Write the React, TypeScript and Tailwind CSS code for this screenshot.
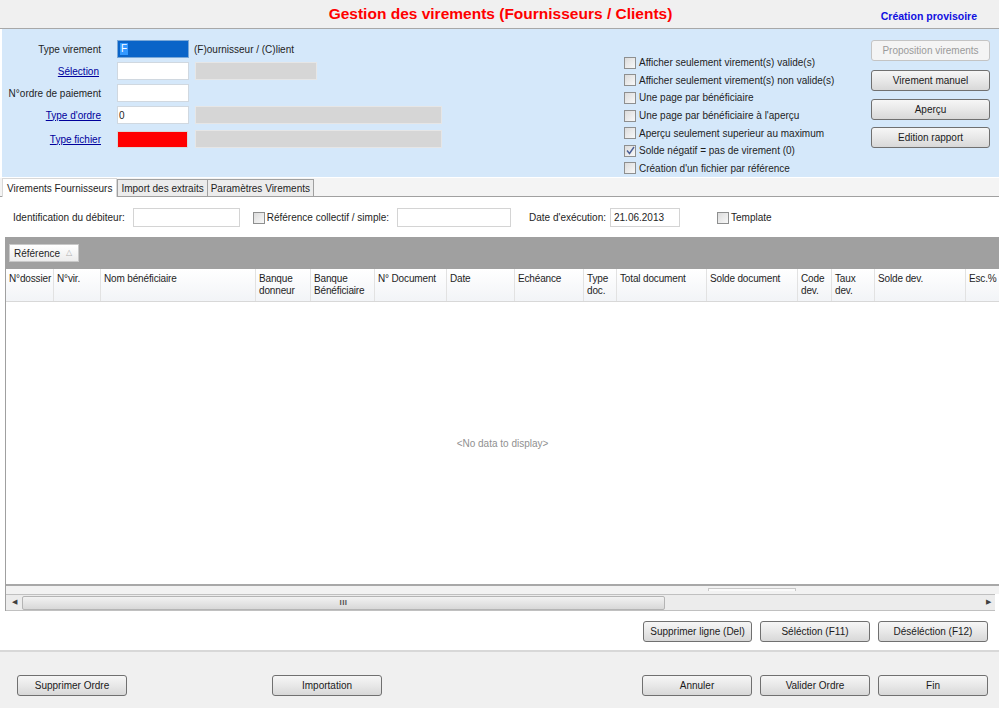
import React from "react";

const F = { fontFamily: "'Liberation Sans', Arial, sans-serif" };

function Btn({ children, w = "w-[110px]", disabled = false }: { children: React.ReactNode; w?: string; disabled?: boolean }) {
  return (
    <div
      className={`${w} h-[21px] flex items-center justify-center rounded-[3px] border ${
        disabled ? "border-[#c4c4c4] text-[#9a9a9a] bg-[#f4f4f4]" : "border-[#707070] text-[#1a1a1a] bg-gradient-to-b from-[#f6f6f6] via-[#e8e8e8] to-[#d8d8d8]"
      } text-[10px]`}
    >
      {children}
    </div>
  );
}

function Check({ checked = false }: { checked?: boolean }) {
  return (
    <div className="w-[12px] h-[12px] border border-[#8e8f8f] bg-gradient-to-br from-[#dcdcdc] to-[#f8f8f8] flex items-center justify-center shrink-0">
      {checked && (
        <svg width="9" height="9" viewBox="0 0 9 9">
          <path d="M1 4.5 L3.5 7.5 L8 1" fill="none" stroke="#4a5f97" strokeWidth="1.4" />
        </svg>
      )}
    </div>
  );
}

const cols: { label: string[]; w: number }[] = [
  { label: ["N°dossier"], w: 48 },
  { label: ["N°vir."], w: 47 },
  { label: ["Nom bénéficiaire"], w: 155 },
  { label: ["Banque", "donneur"], w: 55 },
  { label: ["Banque", "Bénéficiaire"], w: 64 },
  { label: ["N° Document"], w: 72 },
  { label: ["Date"], w: 68 },
  { label: ["Echéance"], w: 69 },
  { label: ["Type", "doc."], w: 33 },
  { label: ["Total document"], w: 90 },
  { label: ["Solde document"], w: 91 },
  { label: ["Code", "dev."], w: 34 },
  { label: ["Taux", "dev."], w: 43 },
  { label: ["Solde dev."], w: 91 },
  { label: ["Esc.%"], w: 60 },
];

export default function App() {
  return (
    <div style={F} className="w-[999px] h-[708px] overflow-hidden bg-white text-[10px] text-[#1e1e1e] flex flex-col">
      {/* header */}
      <div className="h-[29px] shrink-0 bg-[#f0f0f0] border-b border-[#a8a8a8] flex items-center relative">
        <div className="flex-1 text-center text-[#ff0000] font-bold text-[15.5px] pl-[2px]">Gestion des virements (Fournisseurs / Clients)</div>
        <div className="absolute right-[22px] top-[9px] text-[#1010e0] font-bold text-[10.5px]">Création provisoire</div>
      </div>

      {/* blue panel */}
      <div className="h-[148px] shrink-0 bg-[#d5e8fa] ml-[2px] flex">
        {/* form */}
        <div className="w-[460px] pt-[11px] flex flex-col gap-[4px]">
          <div className="flex items-center h-[18px]">
            <div className="w-[99px] text-right">Type virement</div>
            <div className="ml-[16px] w-[72px] h-[18px] bg-[#0a64c8] border border-[#7aa8d8] flex items-center pl-[2px]">
              <span className="bg-[#3399ff] text-white leading-[12px] px-[1px]">F</span>
            </div>
            <div className="ml-[5px]">(F)ournisseur / (C)lient</div>
          </div>
          <div className="flex items-center h-[18px]">
            <div className="w-[97px] text-right"><span className="text-[#00009c] underline">Sélection</span></div>
            <div className="ml-[18px] w-[72px] h-[18px] bg-white border border-[#d0d8e0]" />
            <div className="ml-[6px] w-[122px] h-[18px] bg-[#d6d6d6] border border-[#e6e6e6]" />
          </div>
          <div className="flex items-center h-[18px]">
            <div className="w-[99px] text-right">N°ordre de paiement</div>
            <div className="ml-[16px] w-[72px] h-[18px] bg-white border border-[#d0d8e0]" />
          </div>
          <div className="flex items-center h-[18px]">
            <div className="w-[99px] text-right"><span className="text-[#00009c] underline">Type d'ordre</span></div>
            <div className="ml-[16px] w-[72px] h-[18px] bg-white border border-[#d0d8e0] flex items-center pl-[1px]">0</div>
            <div className="ml-[6px] w-[247px] h-[18px] bg-[#d6d6d6] border border-[#e6e6e6]" />
          </div>
          <div className="flex items-center h-[18px] mt-[2px]">
            <div className="w-[99px] text-right"><span className="text-[#00009c] underline">Type fichier</span></div>
            <div className="ml-[16px] w-[71px] h-[17px] bg-[#ff0000] border border-[#d8d8d8]" />
            <div className="ml-[7px] w-[247px] h-[18px] bg-[#d6d6d6] border border-[#e6e6e6]" />
          </div>
        </div>

        {/* checkboxes */}
        <div className="ml-[162px] pt-[25px] flex flex-col">
          {[
            ["Afficher seulement virement(s) valide(s)", false],
            ["Afficher seulement virement(s) non valide(s)", false],
            ["Une page par bénéficiaire", false],
            ["Une page par bénéficiaire à l'aperçu", false],
            ["Aperçu seulement superieur au maximum", false],
            ["Solde négatif = pas de virement (0)", true],
            ["Création d'un fichier par référence", false],
          ].map(([t, c]) => (
            <div key={t as string} className="h-[18.2px] flex items-center gap-[3px]">
              <Check checked={c as boolean} />
              <span>{t as string}</span>
            </div>
          ))}
        </div>

        {/* buttons */}
        <div className="ml-auto mr-[9px] pt-[11px] flex flex-col">
          <Btn w="w-[119px]" disabled>Proposition virements</Btn>
          <div className="h-[9px]" />
          <Btn w="w-[119px]">Virement manuel</Btn>
          <div className="h-[8px]" />
          <Btn w="w-[119px]">Aperçu</Btn>
          <div className="h-[7px]" />
          <Btn w="w-[119px]">Edition rapport</Btn>
        </div>
      </div>

      {/* tabs */}
      <div className="h-[19px] shrink-0 bg-[#f4f4f4] flex items-end border-b border-[#a0a0a0] pl-[2px] mt-[1px]">
        <div className="h-[19px] px-[4px] bg-white flex items-center border-t border-l border-r border-[#d8d8d8] -mb-px">Virements Fournisseurs</div>
        <div className="h-[17px] px-[3px] bg-[#ececec] flex items-center border border-[#a0a0a0] border-b-0">Import des extraits</div>
        <div className="h-[17px] px-[3px] bg-[#ececec] flex items-center border border-l-0 border-[#a0a0a0] border-b-0">Paramètres Virements</div>
      </div>

      {/* filter row */}
      <div className="h-[40px] shrink-0 flex items-center pt-[1px]">
        <span className="ml-[13px]">Identification du débiteur:</span>
        <div className="ml-[8px] w-[107px] h-[19px] border border-[#d4d4d4] bg-white" />
        <div className="ml-[13px]"><Check /></div>
        <span className="ml-[2px]">Référence collectif / simple:</span>
        <div className="ml-[8px] w-[114px] h-[19px] border border-[#d4d4d4] bg-white" />
        <span className="ml-[18px]">Date d'exécution:</span>
        <div className="ml-[4px] w-[70px] h-[19px] border border-[#d4d4d4] bg-white flex items-center pl-[3px]">21.06.2013</div>
        <div className="ml-[37px]"><Check /></div>
        <span className="ml-[2px]">Template</span>
      </div>

      {/* grid */}
      <div className="ml-[5px] flex flex-col border-l border-[#a0a0a0]">
        <div className="h-[32px] bg-[#a0a0a0] flex items-center pl-[3px]">
          <div className="h-[18px] w-[70px] bg-gradient-to-b from-white to-[#ececec] border border-[#c8c8c8] flex items-center pl-[4px] gap-[6px]">
            <span>Référence</span>
            <span className="text-[#b0b0b0] text-[8px]">△</span>
          </div>
        </div>
        <div className="h-[33px] flex bg-gradient-to-b from-white to-[#f2f4f7] border-b border-[#d8d8d8] tracking-[-0.15px]">
          {cols.map((c, i) => (
            <div
              key={i}
              style={{ width: c.w }}
              className="shrink-0 border-r border-[#e2e2e2] pl-[3px] pt-[4px] leading-[12px] overflow-hidden whitespace-nowrap"
            >
              {c.label.map((l) => (
                <div key={l}>{l}</div>
              ))}
            </div>
          ))}
        </div>
        <div className="h-[284px] flex items-center justify-center text-[#909090] border-b-2 border-[#a8a8a8]">
          &lt;No data to display&gt;
        </div>
        <div className="h-[8px] bg-[#f2f2f2] relative">
          <div className="absolute left-[702px] top-[2px] w-[88px] h-[3px] border-t border-l border-r border-[#c8c8c8] bg-[#fafafa]" />
        </div>
        <div className="h-[17px] bg-[#ececec] border-t border-b border-[#c0c0c0] flex items-center mr-[4px]">
          <div className="w-[16px] flex justify-center text-[7px] text-[#404040]">◀</div>
          <div className="w-[643px] h-[14px] rounded-[2px] border border-[#b4b4b4] bg-gradient-to-b from-[#f2f2f2] to-[#d8d8d8] flex items-center justify-center text-[8px] text-[#555] tracking-[0.5px] font-bold">III</div>
          <div className="flex-1" />
          <div className="w-[14px] flex justify-center text-[7px] text-[#404040]">▶</div>
        </div>
      </div>

      {/* line buttons */}
      <div className="h-[39px] shrink-0 flex items-center justify-end gap-[8px] pr-[11px] pt-[2px]">
        <Btn w="w-[109px]">Supprimer ligne (Del)</Btn>
        <Btn w="w-[110px]">Séléction (F11)</Btn>
        <Btn w="w-[110px]">Déséléction (F12)</Btn>
      </div>

      {/* footer */}
      <div className="flex-1 bg-[#f0f0f0] border-t-2 border-[#d8d8d8] flex items-center pt-[11px]">
        <div className="ml-[17px]"><Btn w="w-[110px]">Supprimer Ordre</Btn></div>
        <div className="ml-[145px]"><Btn w="w-[110px]">Importation</Btn></div>
        <div className="ml-auto mr-[11px] flex gap-[8px]">
          <Btn w="w-[110px]">Annuler</Btn>
          <Btn w="w-[110px]">Valider Ordre</Btn>
          <Btn w="w-[110px]">Fin</Btn>
        </div>
      </div>
    </div>
  );
}
